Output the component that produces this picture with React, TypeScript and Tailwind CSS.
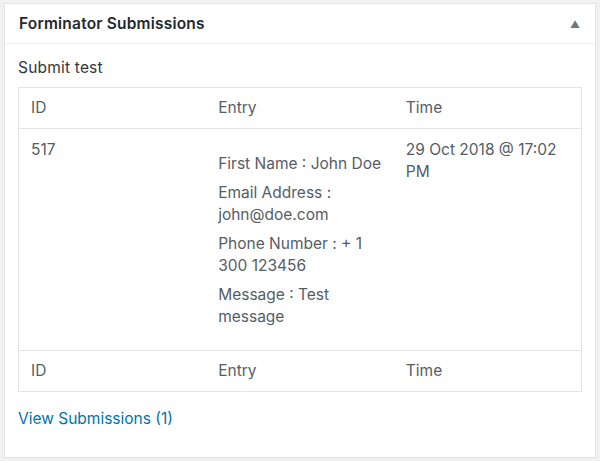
const font = { fontFamily: 'Inter, "Noto Sans", sans-serif' };

const entry = [
	'First Name : John Doe',
	'Email Address : john@doe.com',
	'Phone Number : + 1 300 123456',
	'Message : Test message',
];

function HeadRow() {
	return (
		<tr className="border-b border-[#e5e5e5]">
			<th className="w-1/3 px-[12px] py-[9px] text-left font-normal">ID</th>
			<th className="w-1/3 px-[12px] py-[9px] text-left font-normal">Entry</th>
			<th className="w-1/3 px-[12px] py-[9px] text-left font-normal">Time</th>
		</tr>
	);
}

export default function App() {
	return (
		<div className="min-h-[461px] bg-[#f1f1f1] pt-[3px] pr-[4px] pb-[4px] pl-[4px]" style={font}>
			<div className="border border-[#e2e4e7] bg-white">
				<div className="flex h-[40px] items-center justify-between border-b border-[#eeeeee] pl-[14px] pr-[15px]">
					<h2 className="pt-[1px] text-[15.5px] font-semibold tracking-[0.2px] text-[#23282d]">Forminator Submissions</h2>
					<span className="text-[10px] leading-none text-[#72777c]">▲</span>
				</div>
				<div className="px-[13px] pt-[13px] pb-[27px] text-[15.5px] leading-[22px] text-[#32373c]">
					<p className="mb-[8px] tracking-[0.2px]">Submit test</p>
					<table className="w-full table-fixed border-collapse border border-[#e5e5e5] text-[#555d66]">
						<thead>
							<HeadRow />
						</thead>
						<tbody>
							<tr className="border-b border-[#e5e5e5] align-top">
								<td className="px-[12px] pt-[10px] pb-[10px]">517</td>
								<td className="px-[12px] pt-[24px] pb-[22px]">
									<div className="flex flex-col gap-[7px]">
										{entry.map((line) => (
											<p key={line}>{line}</p>
										))}
									</div>
								</td>
								<td className="px-[12px] pt-[10px] pb-[10px]">29 Oct 2018 @ 17:02 PM</td>
							</tr>
						</tbody>
						<tfoot>
							<HeadRow />
						</tfoot>
					</table>
					<a href="#" className="mt-[16px] block text-[#0073aa]">
						View Submissions (1)
					</a>
				</div>
			</div>
		</div>
	);
}
